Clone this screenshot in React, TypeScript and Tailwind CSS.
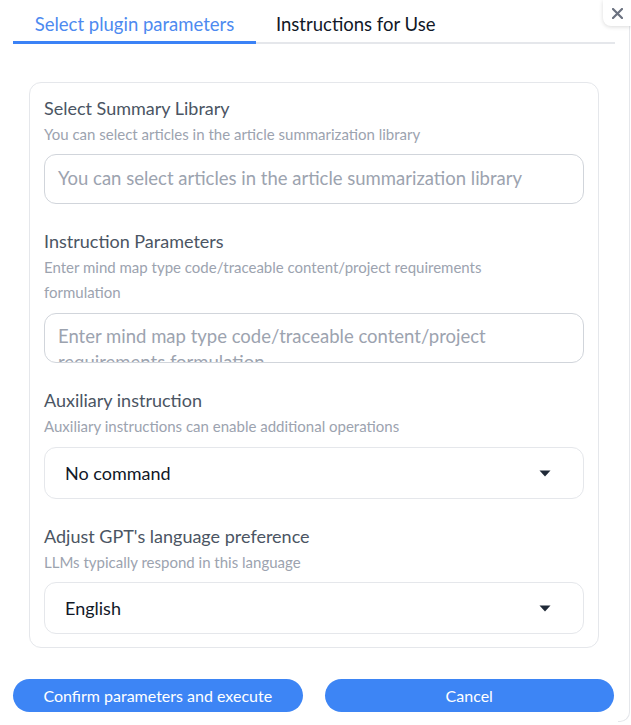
import React from "react";

const font = { fontFamily: "Lato, 'Noto Sans', sans-serif" };

function Caret() {
  return (
    <svg width="12" height="7" viewBox="0 0 12 7" className="shrink-0">
      <path d="M0.5 0.5 L11.5 0.5 L6 6.5 Z" fill="#1f2937" />
    </svg>
  );
}

function Field({
  title,
  desc,
  children,
  wide,
}: {
  title: string;
  desc: React.ReactNode;
  children: React.ReactNode;
  wide?: boolean;
}) {
  return (
    <div className="flex flex-col">
      <div className="text-[18px] leading-[26px] text-[#4b5563]">{title}</div>
      <div className="mt-[1px] text-[15px] leading-[25px] text-[#9ca3af]">{desc}</div>
      <div className={wide ? "mt-[8px]" : "mt-[7px]"}>{children}</div>
    </div>
  );
}

export default function App() {
  return (
    <div className="relative h-[725px] w-[631px] overflow-hidden bg-white" style={font}>
      <div className="absolute right-[1px] top-0 h-[722px] w-[12px] rounded-br-[10px] border-r border-b border-[#e5e7eb]" />
      <button className="absolute right-0 top-0 flex h-[26px] w-[28px] items-center justify-center rounded-bl-[8px] bg-white shadow-[0_1px_4px_rgba(0,0,0,0.15)]">
        <svg width="11" height="11" viewBox="0 0 11 11">
          <path d="M1 1 L10 10 M10 1 L1 10" stroke="#6b7280" strokeWidth="2.2" strokeLinecap="round" />
        </svg>
      </button>

      <div className="flex flex-col px-[13px]">
        <div className="mr-[3px] flex border-b-2 border-[#e5e7eb] pt-[10px]">
          <div className="-mb-[2px] w-[243px] border-b-[3px] border-[#3b82f6] pb-[3px] text-center text-[18.5px] leading-[28px] text-[#4d8af0]">
            Select plugin parameters
          </div>
          <div className="-mb-[2px] pl-[20px] pb-[3px] text-[18.5px] leading-[28px] text-[#111827]">
            Instructions for Use
          </div>
        </div>

        <div className="ml-[16px] mr-[19px] mt-[38px] flex flex-col gap-[24px] rounded-[12px] border border-[#e5e7eb] px-[14px] pb-[13px] pt-[12px]">
          <Field title="Select Summary Library" desc="You can select articles in the article summarization library">
            <div className="flex h-[50px] items-center rounded-[12px] border border-[#d1d5db] px-[13px] text-[18.5px] text-[#9ca3af]">
              You can select articles in the article summarization library
            </div>
          </Field>

          <Field
            wide
            title="Instruction Parameters"
            desc={
              <>
                Enter mind map type code/traceable content/project requirements
                <br />
                formulation
              </>
            }
          >
            <div className="h-[50px] overflow-hidden rounded-[12px] border border-[#d1d5db] px-[13px] pt-[9px] text-[18.5px] leading-[26px] text-[#9ca3af]">
              Enter mind map type code/traceable content/project
              <br />
              requirements formulation
            </div>
          </Field>

          <Field wide title="Auxiliary instruction" desc="Auxiliary instructions can enable additional operations">
            <div className="flex h-[52px] items-center justify-between rounded-[12px] border border-[#e5e7eb] pl-[20px] pr-[32px] text-[18px] text-[#111827]">
              <span>No command</span>
              <Caret />
            </div>
          </Field>

          <Field title="Adjust GPT's language preference" desc="LLMs typically respond in this language">
            <div className="flex h-[52px] items-center justify-between rounded-[12px] border border-[#e5e7eb] pl-[20px] pr-[32px] text-[18px] text-[#111827]">
              <span>English</span>
              <Caret />
            </div>
          </Field>
        </div>

        <div className="mt-[31px] flex gap-[22px] pr-[4px]">
          <button className="h-[33px] flex-1 rounded-full bg-[#3d85f5] text-[16px] text-white">
            Confirm parameters and execute
          </button>
          <button className="h-[33px] flex-1 rounded-full bg-[#3d85f5] text-[16px] text-white">
            Cancel
          </button>
        </div>
      </div>
    </div>
  );
}
